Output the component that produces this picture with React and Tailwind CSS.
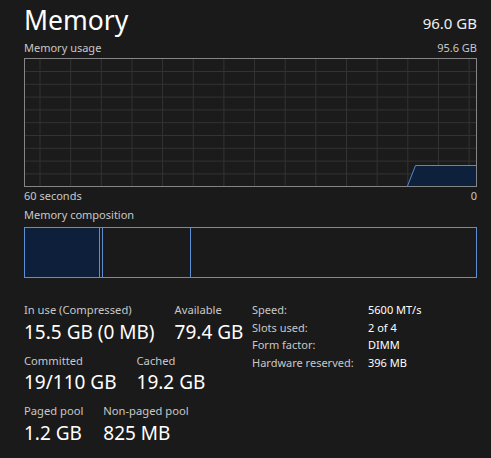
import React from "react";

const FONT = { fontFamily: '"Noto Sans", "Open Sans", sans-serif' };

// usage graph, pixel coordinates inside the bordered box
const W = 451;
const H = 127;
const vLines = Array.from({ length: 15 }, (_, i) => 15 + i * 30.65);
const hLines = Array.from({ length: 9 }, (_, i) => 12.5 + i * 12.8);

function UsageGraph() {
  return (
    <div className="border border-[#858585] bg-[#1b1b1b]">
      <svg width={W} height={H} className="block">
        {vLines.map((x) => (
          <line key={"v" + x} x1={x} x2={x} y1={0} y2={H} stroke="#333333" strokeWidth="1" />
        ))}
        {hLines.map((y) => (
          <line key={"h" + y} x1={0} x2={W} y1={y} y2={y} stroke="#333333" strokeWidth="1" />
        ))}
        <path d={`M382.5 ${H} L390.5 106.5 L${W} 106.5 L${W} ${H} Z`} fill="#0d213d" />
        <path d={`M382.5 ${H} L390.5 106.5 L${W} 106.5`} fill="none" stroke="#4f8bd1" strokeWidth="1" />
      </svg>
    </div>
  );
}

function Composition() {
  return (
    <div className="flex h-[51px] border border-[#5c8fd6]">
      <div className="w-[74px] bg-[#0d1f3a]" />
      <div className="w-[3px] border-l border-[#5c8fd6]" />
      <div className="w-[88px] border-l border-[#5c8fd6]" />
      <div className="flex-1 border-l border-[#5c8fd6]" />
    </div>
  );
}

function Stat({ label, value }) {
  return (
    <div>
      <div className="text-[11.2px] leading-[15px] text-[#c8c8c8]">{label}</div>
      <div className="text-[19px] leading-[25px] text-white mt-[2.6px]">{value}</div>
    </div>
  );
}

const specs = [
  ["Speed:", "5600 MT/s"],
  ["Slots used:", "2 of 4"],
  ["Form factor:", "DIMM"],
  ["Hardware reserved:", "396 MB"],
];

export default function App() {
  return (
    <div className="w-[491px] h-[458px] bg-[#1a1a1a] text-white overflow-hidden pl-[24px] pr-[14px]" style={FONT}>
      {/* header */}
      <div className="flex items-end justify-between pt-[2px]">
        <div className="text-[26.5px] leading-[36px] text-white">Memory</div>
        <div className="text-[15px] leading-[20px] mb-[5px] text-[#f0f0f0]">96.0 GB</div>
      </div>
      <div className="flex justify-between text-[11px] leading-[15px] text-[#c8c8c8] mt-[2px] mb-[3px]">
        <span>Memory usage</span>
        <span>95.6 GB</span>
      </div>
      <UsageGraph />
      <div className="flex justify-between text-[11px] leading-[15px] text-[#c8c8c8] mt-[1px]">
        <span>60 seconds</span>
        <span>0</span>
      </div>
      <div className="text-[11px] leading-[15px] text-[#c8c8c8] mt-[4px] mb-[5px]">Memory composition</div>
      <Composition />

      {/* stats */}
      <div className="flex mt-[24px]">
        <div className="w-[228px] flex flex-col gap-[8px]">
          <div className="flex gap-[20px]">
            <Stat label="In use (Compressed)" value="15.5 GB (0 MB)" />
            <Stat label="Available" value="79.4 GB" />
          </div>
          <div className="flex gap-[20px]">
            <Stat label="Committed" value="19/110 GB" />
            <Stat label="Cached" value="19.2 GB" />
          </div>
          <div className="flex gap-[20px]">
            <Stat label="Paged pool" value="1.2 GB" />
            <Stat label="Non-paged pool" value="825 MB" />
          </div>
        </div>
        <div className="flex flex-col text-[11px] leading-[17.7px] text-white -mt-[1px]">
          {specs.map(([k, v]) => (
            <div key={k} className="flex">
              <span className="w-[116px] text-[#c8c8c8]">{k}</span>
              <span>{v}</span>
            </div>
          ))}
        </div>
      </div>
    </div>
  );
}
